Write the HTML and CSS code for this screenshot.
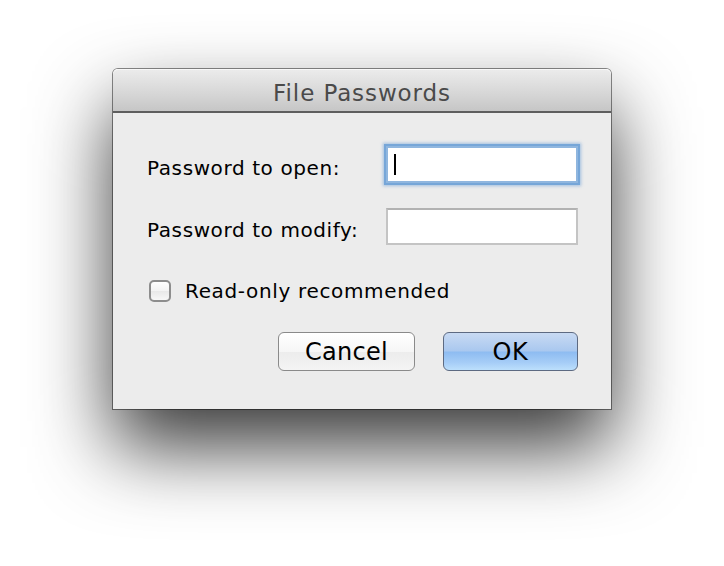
FILE: index.html
```html
<!DOCTYPE html>
<html lang="en">
  <head>
    <meta charset="UTF-8" />
    <meta name="viewport" content="width=device-width, initial-scale=1.0" />
    <title>File Passwords</title>
    <link rel="stylesheet" href="styles.css">
  </head>
  <body>
    <div class="window">
      <div class="titlebar">File Passwords</div>
      <div class="content">
        <div class="form">
          <label class="label">Password to open:</label>
          <div class="field focused"><span class="caret"></span></div>
          <label class="label">Password to modify:</label>
          <div class="field"></div>
        </div>
        <div class="check-row">
          <span class="checkbox"></span>
          <span class="check-label">Read-only recommended</span>
        </div>
        <div class="buttons">
          <button class="btn">Cancel</button>
          <button class="btn default">OK</button>
        </div>
      </div>
    </div>
  </body>
</html>
```

FILE: styles.css
```css
body {
  margin: 0;
  height: 566px;
  background-color: #ffffff;
  font-family: "DejaVu Sans", "Lucida Grande", sans-serif;
  display: flex;
  flex-direction: column;
  align-items: center;
  padding-top: 69px;
  box-sizing: border-box;
  overflow: hidden;
}
.window {
  width: 498px;
  border-radius: 5px 5px 0 0;
  background: #ececec;
  box-shadow: 0 0 0 1px rgba(0, 0, 0, 0.45), 0 38px 78px rgba(0, 0, 0, 0.78);
}
.titlebar {
  height: 42px;
  line-height: 48px;
  text-align: center;
  font-size: 23px;
  letter-spacing: 0.9px;
  color: #4a4a4a;
  border-radius: 5px 5px 0 0;
  background: linear-gradient(#ececec, #d6d6d6 60%, #c6c6c6);
  box-shadow: inset 0 1px 0 #f8f8f8;
  border-bottom: 2px solid #5e5e5e;
}
.content {
  padding: 33px 32px 38px 34px;
}
.form {
  display: grid;
  grid-template-columns: 239px 192px;
  row-gap: 25px;
  align-items: center;
}
.label {
  font-size: 20px;
  letter-spacing: 0.6px;
  color: #000;
  padding-top: 6px;
}
.field {
  height: 37px;
  box-sizing: border-box;
  background: #fff;
  border: 2px solid #c4c4c4;
  border-top-color: #b2b2b2;
  display: flex;
  align-items: center;
  padding-left: 6px;
}
.field.focused {
  border: 2px solid #8fb6df;
  box-shadow: 0 0 0 2px #76a6d8, 0 0 3px 3px rgba(110, 160, 215, 0.6);
}
.caret {
  width: 2px;
  height: 21px;
  background: #000;
}
.check-row {
  display: flex;
  align-items: center;
  margin-top: 35px;
  margin-left: 2px;
  height: 22px;
}
.checkbox {
  width: 18px;
  height: 18px;
  border: 2px solid #8d8d8d;
  border-radius: 5px;
  background: linear-gradient(#ffffff, #f3f3f3 50%, #e8e8e8 51%, #f7f7f7);
}
.check-label {
  margin-left: 14px;
  font-size: 20px;
  letter-spacing: 0.65px;
  color: #000;
}
.buttons {
  display: flex;
  justify-content: flex-end;
  gap: 28px;
  margin-top: 30px;
  padding-right: 1px;
}
.btn {
  font-family: inherit;
  font-size: 24px;
  letter-spacing: 0.3px;
  color: #000;
  height: 39px;
  width: 137px;
  border: 1px solid #8a8a8a;
  border-radius: 6px;
  background: linear-gradient(#ffffff, #f6f6f6 50%, #ececec 51%, #f4f4f4);
  padding: 0;
}
.btn.default {
  width: 135px;
  letter-spacing: 0.8px;
  border-color: #5d6a82;
  background: linear-gradient(#c8daf3, #aac8ef 48%, #8ebcf1 52%, #a6cdf7 80%, #bcdffc);
}
```
